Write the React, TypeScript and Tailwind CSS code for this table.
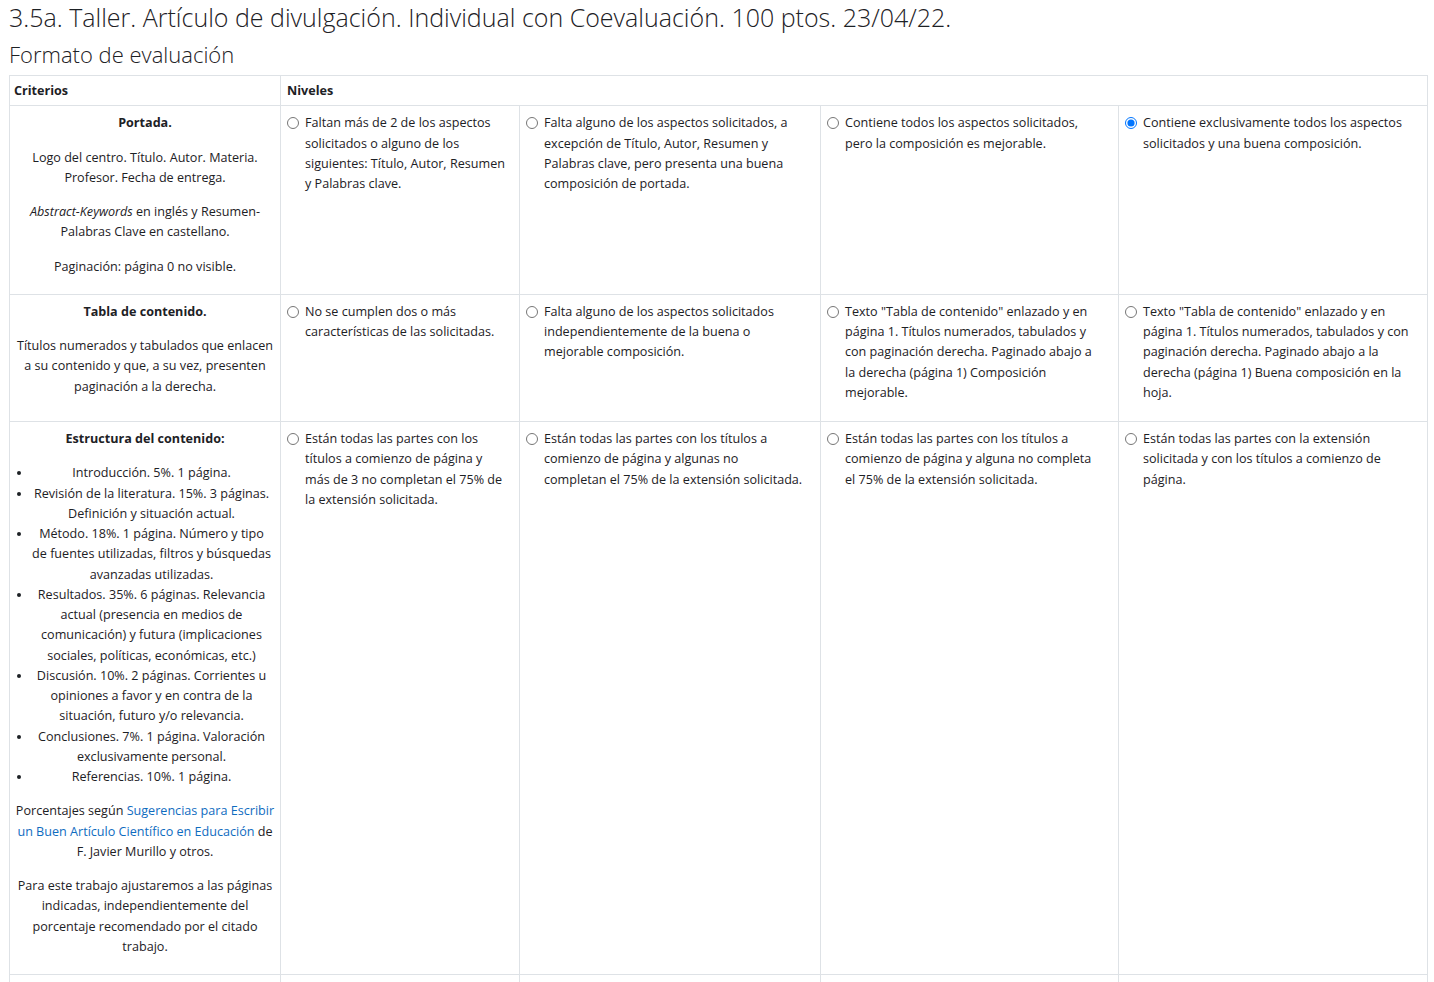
import React from "react";

const Radio = ({ checked = false }: { checked?: boolean }) => (
  <input
    type="radio"
    readOnly
    checked={checked}
    className="mt-[4px] mr-[6px] h-[12px] w-[12px] shrink-0 accent-[#0075ff]"
  />
);

const Level = ({
  text,
  checked = false,
  narrow = false,
}: {
  text: string;
  checked?: boolean;
  narrow?: boolean;
}) => (
  <td
    className={
      narrow
        ? "border border-[#dee2e6] pl-[6px] pr-[11px] pt-[7px] pb-[18px] align-top"
        : "border border-[#dee2e6] pl-[6px] pr-[16px] pt-[7px] pb-[18px] align-top"
    }
  >
    <div className="flex items-start">
      <Radio checked={checked} />
      <span>{text}</span>
    </div>
  </td>
);

const critCls =
  "border border-[#dee2e6] px-[4px] pt-[7px] pb-[3px] align-top text-center";

export default function App() {
  return (
    <div className="bg-white text-[#1d2125] text-[12.6px] leading-[20.25px] px-[9px] min-h-screen">
      <div style={{ fontFamily: '"Open Sans", "Noto Sans", sans-serif' }}>
        <h2 className="font-light text-[25px] leading-[32px] pt-[1px] text-[#1d2125]">
          3.5a. Taller. Artículo de divulgación. Individual con Coevaluación. 100 ptos. 23/04/22.
        </h2>
        <h3 className="font-light text-[22px] leading-[30px] mt-[6px] mb-[6px] text-[#1d2125]">
          Formato de evaluación
        </h3>
        <table className="w-[1418px] table-fixed border-collapse border border-[#dee2e6]">
          <colgroup>
            <col className="w-[271px]" />
            <col className="w-[239px]" />
            <col className="w-[301px]" />
            <col className="w-[298px]" />
            <col className="w-[309px]" />
          </colgroup>
          <thead>
            <tr>
              <th className="border border-[#dee2e6] px-[4px] pt-[5px] pb-[4px] text-left font-bold">Criterios</th>
              <th colSpan={4} className="border border-[#dee2e6] px-[6px] pt-[5px] pb-[4px] text-left font-bold">
                Niveles
              </th>
            </tr>
          </thead>
          <tbody>
            <tr>
              <td className={critCls}>
                <p className="mb-[14px] font-bold">Portada.</p>
                <p className="mb-[14px]">Logo del centro. Título. Autor. Materia. Profesor. Fecha de entrega.</p>
                <p className="mb-[14px]">
                  <em>Abstract-Keywords</em> en inglés y Resumen-Palabras Clave en castellano.
                </p>
                <p className="mb-[14px]">Paginación: página 0 no visible.</p>
              </td>
              <Level narrow text="Faltan más de 2 de los aspectos solicitados o alguno de los siguientes: Título, Autor, Resumen y Palabras clave." />
              <Level text="Falta alguno de los aspectos solicitados, a excepción de Título, Autor, Resumen y Palabras clave, pero presenta una buena composición de portada." />
              <Level text="Contiene todos los aspectos solicitados, pero la composición es mejorable." />
              <Level checked text="Contiene exclusivamente todos los aspectos solicitados y una buena composición." />
            </tr>
            <tr>
              <td className={critCls}>
                <p className="mb-[14px] font-bold">Tabla de contenido.</p>
                <p className="mb-[14px]">
                  Títulos numerados y tabulados que enlacen a su contenido y que, a su vez, presenten paginación a la derecha.
                </p>
              </td>
              <Level narrow text="No se cumplen dos o más características de las solicitadas." />
              <Level text="Falta alguno de los aspectos solicitados independientemente de la buena o mejorable composición." />
              <Level text={'Texto "Tabla de contenido" enlazado y en página 1. Títulos numerados, tabulados y con paginación derecha. Paginado abajo a la derecha (página 1) Composición mejorable.'} />
              <Level text={'Texto "Tabla de contenido" enlazado y en página 1. Títulos numerados, tabulados y con paginación derecha. Paginado abajo a la derecha (página 1) Buena composición en la hoja.'} />
            </tr>
            <tr>
              <td className={critCls}>
                <p className="mb-[14px] font-bold">Estructura del contenido:</p>
                <ul className="mb-[14px] list-disc pl-[18px] pr-[5px]">
                  <li>Introducción. 5%. 1 página.</li>
                  <li>Revisión de la literatura. 15%. 3 páginas. Definición y situación actual.</li>
                  <li>Método. 18%. 1 página. Número y tipo de fuentes utilizadas, filtros y búsquedas avanzadas utilizadas.</li>
                  <li>
                    Resultados. 35%. 6 páginas. Relevancia actual (presencia en medios de comunicación) y futura (implicaciones sociales, políticas, económicas, etc.)
                  </li>
                  <li>Discusión. 10%. 2 páginas. Corrientes u opiniones a favor y en contra de la situación, futuro y/o relevancia.</li>
                  <li>Conclusiones. 7%. 1 página. Valoración exclusivamente personal.</li>
                  <li>Referencias. 10%. 1 página.</li>
                </ul>
                <p className="mb-[14px]">
                  Porcentajes según{" "}
                  <a href="#" className="text-[#0f6cbf]">
                    Sugerencias para Escribir un Buen Artículo Científico en Educación
                  </a>{" "}
                  de F. Javier Murillo y otros.
                </p>
                <p className="mb-[14px]">
                  Para este trabajo ajustaremos a las páginas indicadas, independientemente del porcentaje recomendado por el citado trabajo.
                </p>
              </td>
              <Level narrow text="Están todas las partes con los títulos a comienzo de página y más de 3 no completan el 75% de la extensión solicitada." />
              <Level text="Están todas las partes con los títulos a comienzo de página y algunas no completan el 75% de la extensión solicitada." />
              <Level text="Están todas las partes con los títulos a comienzo de página y alguna no completa el 75% de la extensión solicitada." />
              <Level text="Están todas las partes con la extensión solicitada y con los títulos a comienzo de página." />
            </tr>
            <tr className="h-[60px]">
              <td className="border border-[#dee2e6]"></td>
              <td className="border border-[#dee2e6]"></td>
              <td className="border border-[#dee2e6]"></td>
              <td className="border border-[#dee2e6]"></td>
              <td className="border border-[#dee2e6]"></td>
            </tr>
          </tbody>
        </table>
      </div>
    </div>
  );
}
